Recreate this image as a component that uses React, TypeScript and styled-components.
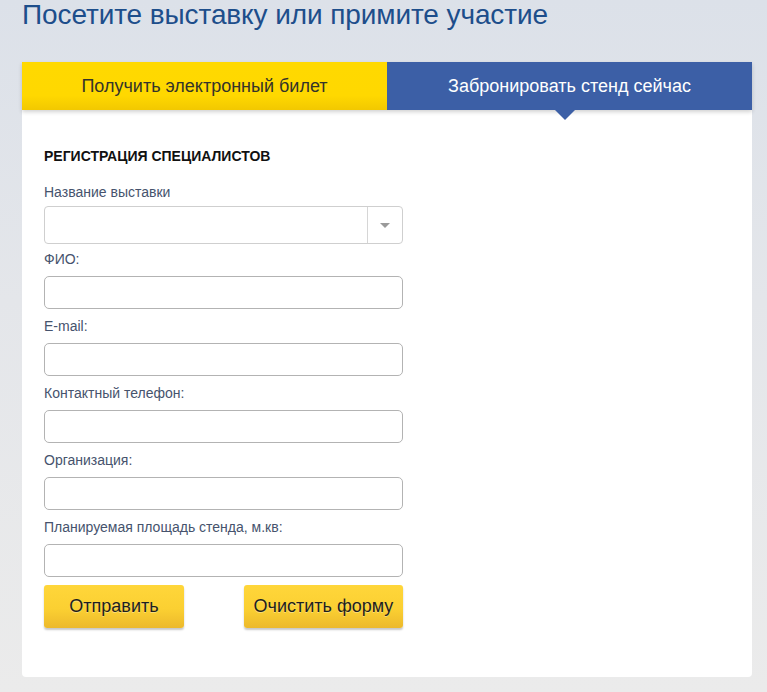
import React from "react";
import styled, { createGlobalStyle } from "styled-components";

const GlobalStyle = createGlobalStyle`
  html, body {
    margin: 0;
    padding: 0;
  }
  body {
    font-family: "Liberation Sans", Arial, sans-serif;
    background: linear-gradient(to bottom, #dce1e9 0px, #e4e6ea 300px, #ebebeb 692px);
    min-height: 692px;
  }
`;

const fields = [
  "ФИО:",
  "E-mail:",
  "Контактный телефон:",
  "Организация:",
  "Планируемая площадь стенда, м.кв:",
];

const App: React.FC = () => {
  return (
    <PageStyle>
      <GlobalStyle />
      <Heading>Посетите выставку или примите участие</Heading>
      <Card>
        <Tabs>
          <Tab variant="yellow">Получить электронный билет</Tab>
          <Tab variant="blue" active>
            Забронировать стенд сейчас
          </Tab>
        </Tabs>
        <Form>
          <FormTitle>РЕГИСТРАЦИЯ СПЕЦИАЛИСТОВ</FormTitle>
          <Field compact>
            <Label compact>Название выставки</Label>
            <SelectBox>
              <SelectValue />
              <SelectArrow>
                <svg width="10" height="5" viewBox="0 0 10 5">
                  <path d="M0 0 L10 0 L5 5 Z" fill="#9a9a9a" />
                </svg>
              </SelectArrow>
            </SelectBox>
          </Field>
          {fields.map((f) => (
            <Field key={f}>
              <Label>{f}</Label>
              <Input type="text" />
            </Field>
          ))}
          <Buttons>
            <Button width={140}>Отправить</Button>
            <Button width={159}>Очистить форму</Button>
          </Buttons>
        </Form>
      </Card>
    </PageStyle>
  );
};

export default App;

const PageStyle = styled.div`
  padding: 0 15px 16px 22px;
  width: 730px;
`;

const Heading = styled.h1`
  margin: 0;
  font-weight: normal;
  font-size: 28px;
  line-height: 30px;
  color: #1d4e8b;
  letter-spacing: -0.1px;
`;

const Card = styled.div`
  margin-top: 32px;
  background: #fff;
  border-radius: 0 0 4px 4px;
`;

const Tabs = styled.div`
  display: grid;
  grid-template-columns: 365px 365px;
  height: 48px;
  box-shadow: 0 2px 4px rgba(0, 0, 0, 0.18);
  position: relative;
  z-index: 1;
`;

const Tab = styled.div<{ variant: "yellow" | "blue"; active?: boolean }>`
  position: relative;
  display: flex;
  align-items: center;
  justify-content: center;
  font-size: 18px;
  color: ${(p) => (p.variant === "yellow" ? "#33332a" : "#ffffff")};
  background: ${(p) =>
    p.variant === "yellow"
      ? "linear-gradient(to bottom, #ffd900 0%, #ffd800 70%, #f2c800 100%)"
      : "#3c5fa6"};

  &::after {
    content: "";
    display: ${(p) => (p.active ? "block" : "none")};
    position: absolute;
    left: 168px;
    bottom: -10px;
    border-left: 10px solid transparent;
    border-right: 10px solid transparent;
    border-top: 10px solid #3c5fa6;
  }
`;

const Form = styled.div`
  display: flex;
  flex-direction: column;
  width: 359px;
  padding: 36px 0 49px 22px;
`;

const FormTitle = styled.div`
  font-size: 14px;
  font-weight: bold;
  line-height: 20px;
  color: #111;
  margin-bottom: 16px;
`;

const Field = styled.div<{ compact?: boolean }>`
  display: flex;
  flex-direction: column;
  margin-bottom: ${(p) => (p.compact ? "5px" : "7px")};
`;

const Label = styled.label<{ compact?: boolean }>`
  font-size: 14px;
  line-height: 20px;
  color: #46536d;
  margin-bottom: ${(p) => (p.compact ? "4px" : "7px")};
`;

const SelectBox = styled.div`
  display: flex;
  height: 38px;
  box-sizing: border-box;
  border: 1px solid #cfcfcf;
  border-radius: 4px;
  background: #fff;
`;

const SelectValue = styled.div`
  flex: 1;
`;

const SelectArrow = styled.div`
  width: 34px;
  border-left: 1px solid #d6d6d6;
  display: flex;
  align-items: center;
  justify-content: center;
`;

const Input = styled.input`
  height: 33px;
  box-sizing: border-box;
  border: 1px solid #b3b3b3;
  border-radius: 5px;
  background: #fff;
  padding: 0 8px;
  font-family: inherit;
  font-size: 14px;
  outline: none;
`;

const Buttons = styled.div`
  display: flex;
  justify-content: space-between;
  margin-top: 1px;
`;

const Button = styled.button<{ width: number }>`
  width: ${(p) => p.width}px;
  height: 43px;
  border: none;
  border-radius: 3px;
  background: linear-gradient(to bottom, #ffd63a 0%, #fbd032 55%, #ecb92c 100%);
  box-shadow: 0 2px 2px rgba(0, 0, 0, 0.22);
  font-family: "Liberation Sans", Arial, sans-serif;
  font-size: 18px;
  color: #1e1e1e;
  text-shadow: 0 1px 0 rgba(255, 255, 255, 0.35);
  cursor: pointer;
  padding: 0;
`;
